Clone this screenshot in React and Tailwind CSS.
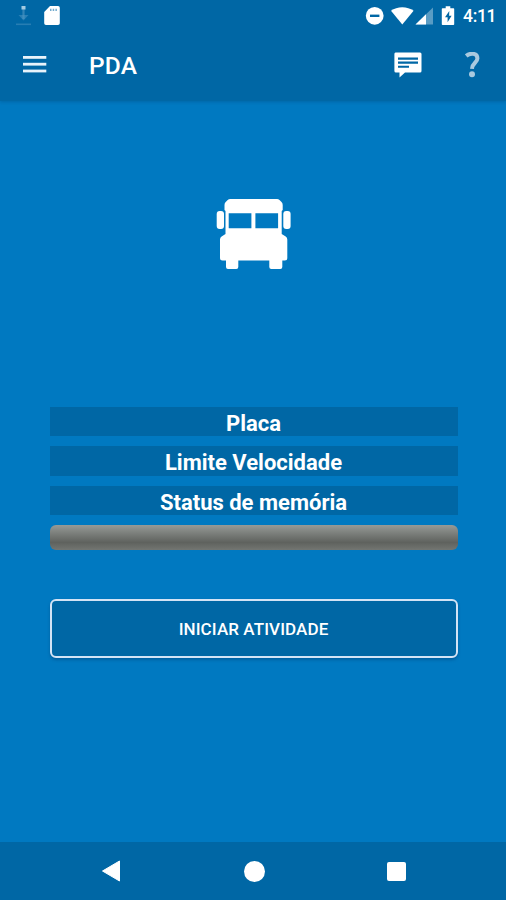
import { useState } from 'react';

const DownloadIcon = () => (
  <svg width="15" height="20" viewBox="0 0 15 20" className="text-[#4d95c2]">
    <path d="M7.5 3v10" stroke="currentColor" strokeWidth="2.2" opacity=".65" />
    <path d="M2.500 9h10l-5 5.500z" fill="currentColor" opacity=".55" />
    <rect x="5.500" y="0" width="4" height="3.500" fill="#a5cbe2" />
    <rect x="0" y="17.500" width="15" height="1.600" fill="currentColor" opacity=".5" />
  </svg>
);

const SdCardIcon = () => (
  <svg width="16" height="20" viewBox="0 0 16 20">
    <path d="M6 0h8A1.800 1.800 0 0 1 15.800 1.800V17.200A1.800 1.800 0 0 1 14 19H2A1.800 1.800 0 0 1 .2 17.200V6z" fill="#fff" />
    <path d="M6 2.700h1.500V5H6zM8.700 2.700h1.500V5H8.700zM11.400 2.700h1.500V5h-1.500z" fill="#0067a5" opacity=".55" />
  </svg>
);

const StatusIcons = () => (
  <svg width="90" height="20" viewBox="0 0 90 20">
    <circle cx="9.700" cy="9.800" r="8.900" fill="#fff" />
    <rect x="5" y="8.600" width="9.400" height="2.400" fill="#0067a5" />
    <path d="M26 4.700C32 0 42.500 0 48.600 4.700L37.300 18.500z" fill="#fff" />
    <path d="M68 1.500v17H50.500z" fill="#fff" opacity=".35" />
    <path d="M61 8.200v10.300H50.500z" fill="#fff" />
    <path d="M80.700 .3h4.600v2h3.200q.7 0 .7.700v15.300q0 .8-.8.800H77.600q-.8 0-.8-.8V3q0-.7.700-.7h3.200z" fill="#fff" />
    <path d="M84.300 5l-4.300 6.300h2.600v5l4-6.500h-2.500z" fill="#0067a5" />
  </svg>
);

const MenuIcon = () => (
  <svg width="24" height="18" viewBox="0 0 24 18" fill="#e8f3fb">
    <rect x="0" y="0" width="23.300" height="2.800" />
    <rect x="0" y="6.800" width="23.300" height="2.800" />
    <rect x="0" y="13.600" width="23.300" height="2.800" />
  </svg>
);

const MessageIcon = () => (
  <svg width="28" height="26" viewBox="0 0 28 26">
    <path d="M1.500 .5h24.500q1.500 0 1.500 1.500v17q0 1.500-1.500 1.500H11l-5.500 5V20.500H2Q.4 20.500 .4 19V2Q.4 .5 1.500 .5z" fill="#fff" />
    <path d="M4 5.500h20v2.200H4zM4 9.500h20v2.200H4zM4 13.700h11v2H4z" fill="#0067a5" />
  </svg>
);

const HelpIcon = () => (
  <svg width="16" height="27" viewBox="0 0 16 27">
    <path d="M1.200 3.900C5.500 .5 12.500 1 12.400 6.400C12.300 11 7.300 10.700 7 16.800" fill="none" stroke="#a9c9df" strokeWidth="4" />
    <circle cx="7" cy="22.200" r="3" fill="#a9c9df" />
  </svg>
);

const BusIcon = () => (
  <svg width="76" height="72" viewBox="0 0 76 72" fill="#fff">
    <path d="M14.300 1h46.700q1.500 0 2.500 1l2 2q1.200 1.200 1.200 3v5l-1 1V36l4 2.500q1.600 1 1.600 3V60q0 2.500-2.500 2.500h-2.500V69q0 2-2 2h-9q-2 0-2-2v-6.500H22.300V69q0 2-2 2H12q-2 0-2-2v-6.500H6.500Q4 62.500 4 60V41.500q0-2 1.600-3L9.500 36V13l-1-1V7q0-1.800 1.200-3l2-2q1-1 2.600-1z" />
    <rect x="0.700" y="13" width="7.300" height="18" rx="3" />
    <rect x="67.300" y="13" width="7.300" height="18" rx="3" />
    <path d="M12.700 15.300h22.700v15H12.700zM39.400 15.300h22.700v15H39.400z" fill="#0079c1" />
  </svg>
);

const filas = ['Placa', 'Limite Velocidade', 'Status de memória'];

const App = () => {
  const [activa, setActiva] = useState(false);

  return (
    <div className="flex h-[900px] w-[506px] flex-col overflow-hidden bg-[#0079c1] font-[Roboto,sans-serif] text-white">
      <header className="h-[101px] shrink-0 bg-[#0067a5] shadow-[0_1px_3px_rgba(0,60,110,0.3)]">
        <div className="flex h-[31px] items-center pl-4 pr-[9px]">
          <DownloadIcon />
          <div className="ml-[13px]">
            <SdCardIcon />
          </div>
          <div className="ml-auto flex items-center gap-2">
            <StatusIcons />
            <span className="w-[34px] text-[17.5px] font-medium leading-5 tracking-[-0.3px]">4:11</span>
          </div>
        </div>
        <div className="flex h-[68px] items-center pl-[23px] pr-[25px]">
          <button aria-label="Menu">
            <MenuIcon />
          </button>
          <h1 className="ml-[42px] pt-px text-[24.5px] font-medium leading-8 tracking-[0.2px]">PDA</h1>
          <button className="ml-auto" aria-label="Mensagens">
            <MessageIcon />
          </button>
          <button className="ml-[43px]" aria-label="Ajuda">
            <HelpIcon />
          </button>
        </div>
      </header>

      <main className="flex grow flex-col pl-[50px] pr-[48px] pt-[97px]">
        <div className="flex justify-center">
          <BusIcon />
        </div>
        <div className="mt-[136.500px] flex flex-col gap-[10px]">
          {filas.map((fila) => (
            <div key={fila} className="h-[29.500px] bg-[#0067a5] pr-px text-center text-[22px] font-bold leading-[33px]">
              {fila}
            </div>
          ))}
        </div>
        <div className="mt-[9.500px] h-[25.500px] rounded-[6px] bg-linear-to-b from-[#969a97] via-[#5f625e] via-70% to-[#737672]" />
        <button
          onClick={() => setActiva(!activa)}
          className="mt-[48.500px] h-[59.500px] rounded-[6px] border-2 border-[#d3e3f5] bg-[#0067a5] pr-px pt-[3px] text-[17px] font-medium tracking-[0.1px] shadow-[0_2px_3px_rgba(0,50,100,0.35)]"
        >
          INICIAR ATIVIDADE
        </button>
      </main>

      <nav className="flex h-[58px] shrink-0 items-center justify-between bg-[#0067a5] pl-[101px] pr-[100px]">
        <svg width="20" height="22" viewBox="0 0 20 22">
          <path d="M18.500 1v20L1.500 11z" fill="#fff" stroke="#fff" strokeLinejoin="round" />
        </svg>
        <div className="size-[21px] rounded-full bg-white" />
        <div className="size-[19px] rounded-[2px] bg-white" />
      </nav>
    </div>
  );
};

export default App;
